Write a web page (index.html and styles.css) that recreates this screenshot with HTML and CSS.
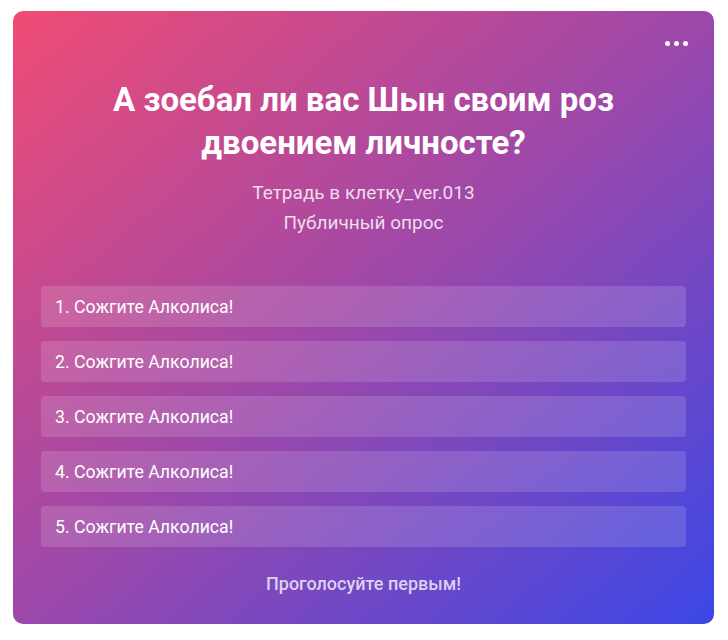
FILE: index.html
```html
<!DOCTYPE html>
<html lang="ru">
<head>
<meta charset="utf-8">
<link rel="stylesheet" href="styles.css">
</head>
<body>
<div class="card">
  <button class="more" aria-label="Ещё"><span></span><span></span><span></span></button>
  <h1 class="title">А зоебал ли вас Шын своим роз двоением личносте?</h1>
  <div class="meta">
    <div>Тетрадь в клетку_ver.013</div>
    <div>Публичный опрос</div>
  </div>
  <ul class="options">
    <li>1. Сожгите Алколиса!</li>
    <li>2. Сожгите Алколиса!</li>
    <li>3. Сожгите Алколиса!</li>
    <li>4. Сожгите Алколиса!</li>
    <li>5. Сожгите Алколиса!</li>
  </ul>
  <div class="footer">Проголосуйте первым!</div>
</div>
</body>
</html>
```

FILE: styles.css
```css
html, body {
  margin: 0;
  background: #ffffff;
}
body {
  padding: 11px 0 0 13px;
  font-family: Roboto, "Liberation Sans", sans-serif;
}
.card {
  position: relative;
  box-sizing: border-box;
  width: 701px;
  height: 613px;
  border-radius: 10px;
  background: linear-gradient(to bottom right, #f04c74 0%, #9c48aa 50%, #3b47e6 100%);
  padding: 67px 28px 0;
  color: #fff;
  display: flex;
  flex-direction: column;
  align-items: center;
}
.more {
  position: absolute;
  top: 26px;
  right: 22px;
  display: flex;
  gap: 4px;
  padding: 4px;
  border: 0;
  background: none;
  cursor: pointer;
}
.more span {
  width: 5px;
  height: 5px;
  border-radius: 50%;
  background: #fff;
}
.title {
  margin: 0;
  max-width: 580px;
  font-size: 33px;
  line-height: 43px;
  font-weight: 700;
  text-align: center;
}
.meta {
  margin-top: 14px;
  font-size: 19px;
  line-height: 30px;
  text-align: center;
  color: rgba(255, 255, 255, 0.82);
}
.options {
  list-style: none;
  margin: 48px 0 0;
  padding: 0;
  align-self: stretch;
  display: flex;
  flex-direction: column;
  gap: 14px;
}
.options li {
  height: 41px;
  box-sizing: border-box;
  padding: 0 14px;
  display: flex;
  align-items: center;
  border-radius: 4px;
  background: rgba(255, 255, 255, 0.14);
  font-size: 17.7px;
}
.footer {
  margin-top: 27px;
  font-size: 18px;
  line-height: 20px;
  font-weight: 500;
  color: rgba(255, 255, 255, 0.75);
}
```
